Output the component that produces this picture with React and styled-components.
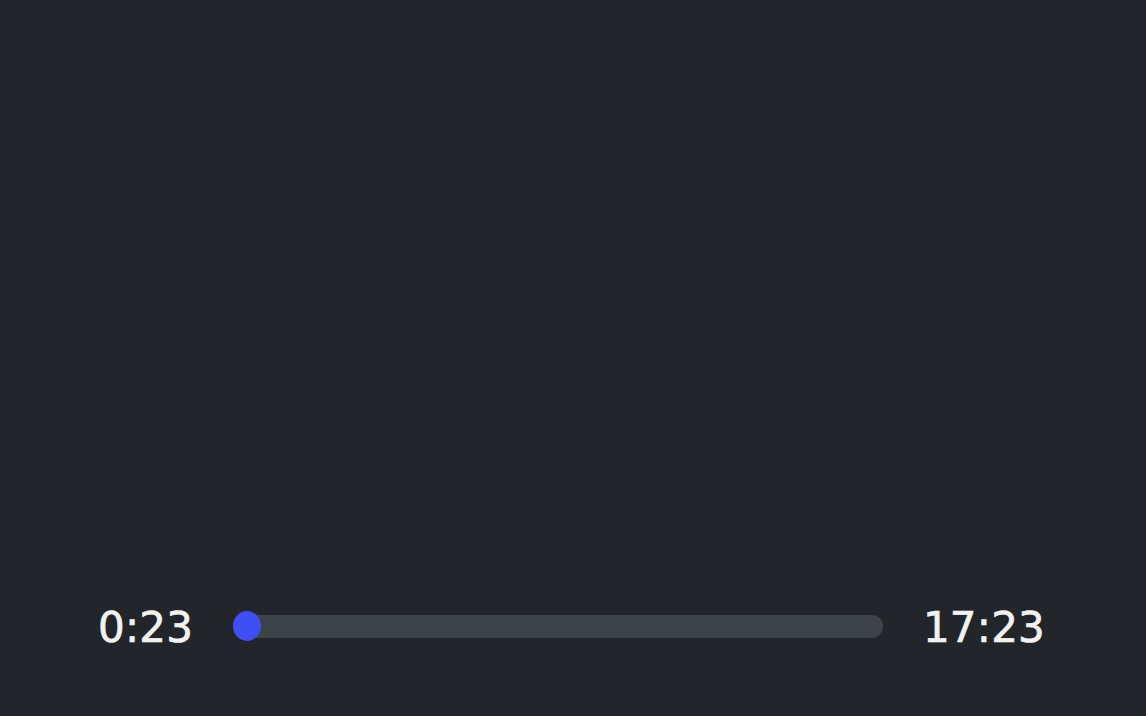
import React from 'react';
import styled, { createGlobalStyle } from 'styled-components';

const GlobalStyle = createGlobalStyle`
  html, body, #root {
    margin: 0;
    padding: 0;
    height: 100%;
    background: #222529;
  }
`;

const toSeconds = (t) => {
  const [m, s] = t.split(':').map(Number);
  return m * 60 + s;
};

export default function App() {
  const current = '0:23';
  const total = '17:23';
  const progress = (toSeconds(current) / toSeconds(total)) * 100;

  return (
    <>
      <GlobalStyle />
      <Screen>
        <Controls>
          <Time>{current}</Time>
          <Track>
            <Thumb style={{ left: `${progress}%` }} />
          </Track>
          <Time>{total}</Time>
        </Controls>
      </Screen>
    </>
  );
}

const Screen = styled.div`
  height: 100%;
  display: flex;
  flex-direction: column;
  justify-content: flex-end;
  padding: 0 101px 68px 98px;
  box-sizing: border-box;
`;

const Controls = styled.div`
  display: flex;
  align-items: center;
  gap: 40px;
  height: 44px;
`;

const Time = styled.span`
  font-family: 'DejaVu Sans', sans-serif;
  font-size: 42px;
  line-height: 44px;
  padding-top: 4px;
  letter-spacing: 0.2px;
  color: #f2f2f2;
  -webkit-text-stroke: 0.7px #f2f2f2;
  white-space: nowrap;
`;

const Track = styled.div`
  position: relative;
  flex: 1;
  height: 23px;
  border-radius: 12px;
  background: #3d4448;
`;

const Thumb = styled.div`
  position: absolute;
  top: 50%;
  width: 28px;
  height: 30px;
  border-radius: 50%;
  background: #3f4ff5;
  transform: translate(-50%, -50%);
`;
